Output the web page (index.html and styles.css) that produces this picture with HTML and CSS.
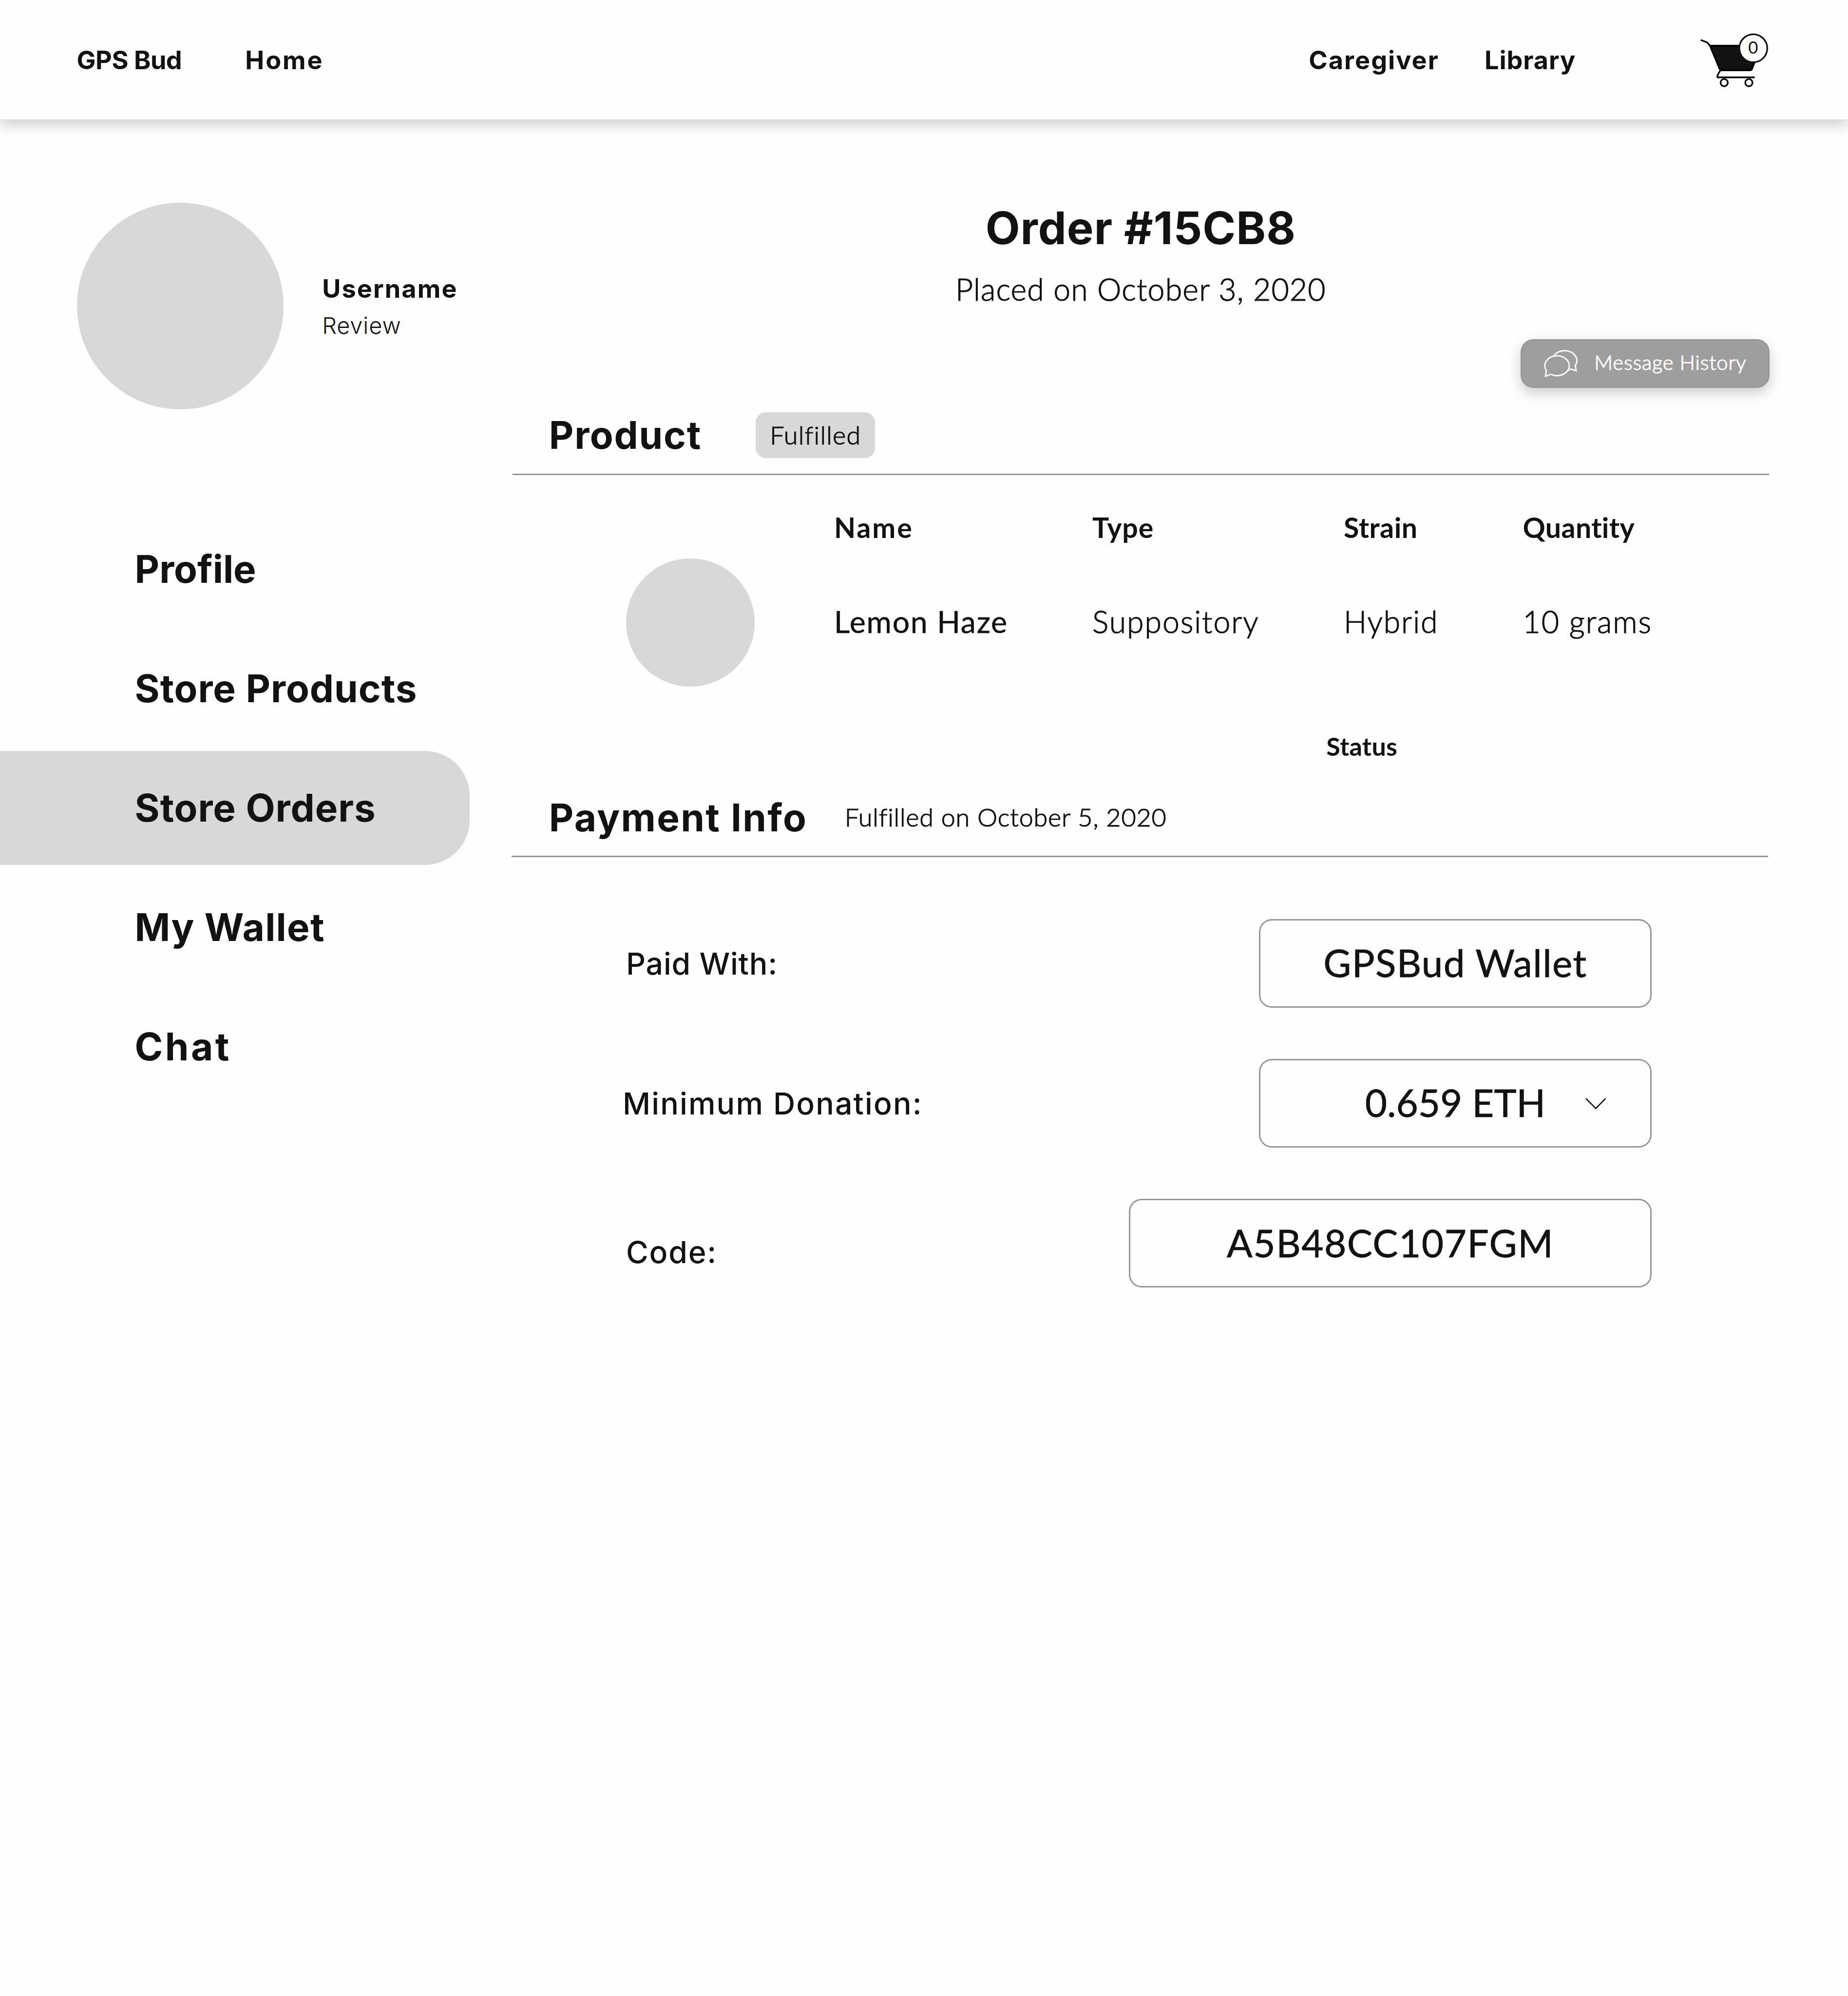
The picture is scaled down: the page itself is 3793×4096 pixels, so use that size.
FILE: index.html
```html
<!DOCTYPE html>
<html lang="en">
<head>
<meta charset="utf-8">
<title>GPS Bud - Order #15CB8</title>
<link rel="stylesheet" href="styles.css">
</head>
<body>
<header class="topbar">
  <a class="nav-link brand">GPS Bud</a>
  <a class="nav-link home">Home</a>
  <a class="nav-link caregiver">Caregiver</a>
  <a class="nav-link library">Library</a>
  <svg class="cart" viewBox="220 105 490 395" aria-label="Cart">
    <g stroke="#000" stroke-width="11.5" stroke-linecap="round" stroke-linejoin="round" fill="none">
      <path fill="#121212" stroke="none" d="M294 200 362 364Q366 373 376 373H574Q584 373 588 365L655 200Z"/>
      <path d="M234 162 272 176Q286 187 294 200L362 364Q366 373 376 373H574Q584 373 588 365L655 200H294"/>
      <path d="M368 373Q346 402 346 418Q346 422 350 422H604"/>
      <circle cx="394" cy="459" r="25.5"/>
      <circle cx="567" cy="459" r="25.5"/>
    </g>
    <circle cx="598" cy="218" r="98" fill="#fff" stroke="#121212" stroke-width="11.5"/>
    <text class="cart-count" x="597" y="254" text-anchor="middle">0</text>
  </svg>
</header>
<div class="layout">
  <aside class="sidebar">
    <div class="profile">
      <div class="avatar"></div>
      <div class="profile-text">
        <div class="username">Username</div>
        <div class="review">Review</div>
      </div>
    </div>
    <nav class="menu">
      <a class="menu-item tight">Profile</a>
      <a class="menu-item">Store Products</a>
      <a class="menu-item active">Store Orders</a>
      <a class="menu-item wallet">My Wallet</a>
      <a class="menu-item chat">Chat</a>
    </nav>
  </aside>
  <main class="content">
    <h1 class="order-title">Order #15CB8</h1>
    <p class="order-date">Placed on October 3, 2020</p>
    <button class="message-btn">
      <svg class="chat-icon" viewBox="3604 814 90 72" fill="none" stroke="#fff" stroke-width="3.2">
        <path d="M3632.5 831.1A28.8 23.2 0 0 1 3656.7 820.5A28.8 23.2 0 0 1 3681.5 855.5L3684 867.6 3671.5 863.3Q3668 865.2 3665 865.8"/>
        <path d="M3614 866.6A28.5 23.2 0 1 1 3624.5 875.5L3612 880.3Z"/>
      </svg>
      <span class="message-label">Message History</span>
    </button>

    <section class="product">
      <div class="section-head">
        <h2 class="section-title product-title">Product</h2>
        <span class="pill">Fulfilled</span>
      </div>
      <div class="product-grid">
        <div class="thumb"></div>
        <div class="th name">Name</div>
        <div class="th type">Type</div>
        <div class="th strain">Strain</div>
        <div class="th quantity">Quantity</div>
        <div class="td strong">Lemon Haze</div>
        <div class="td">Suppository</div>
        <div class="td">Hybrid</div>
        <div class="td">10 grams</div>
      </div>
      <div class="status">Status</div>
    </section>

    <section class="payment">
      <div class="section-head">
        <h2 class="section-title payment-title">Payment Info</h2>
        <span class="fulfilled-date">Fulfilled on October 5, 2020</span>
      </div>
      <div class="fields">
        <div class="field">
          <span class="label paid">Paid With:</span>
          <div class="box"><span class="value wallet-value">GPSBud Wallet</span></div>
        </div>
        <div class="field">
          <span class="label donation">Minimum Donation:</span>
          <div class="box select">
            <span class="value eth-value">0.659 ETH</span>
            <svg class="chevron" viewBox="0 0 16.2 9" fill="none" stroke="#121212" stroke-width="1"><path d="M.4.4 8.1 8.2 15.8.4"/></svg>
          </div>
        </div>
        <div class="field">
          <span class="label code">Code:</span>
          <div class="box wide"><span class="value code-value">A5B48CC107FGM</span></div>
        </div>
      </div>
    </section>
  </main>
</div>
</body>
</html>
```
FILE: styles.css
```css
/* 1rem is ten layout units; the page is 144rem wide */
html { font-size: 26.3403px; }
* { box-sizing: border-box; }
body {
  margin: 0;
  width: 144rem;
  height: 4096px;
  overflow: hidden;
  background: #fefefe;
  color: #121212;
  font-family: Inter, "Liberation Sans", sans-serif;
  white-space: nowrap;
}
h1, h2, p { margin: 0; font-weight: inherit; }

.topbar {
  display: grid;
  grid-template-columns: 13.13rem 82.87rem 13.7rem 16.76rem auto;
  align-items: center;
  height: 9.3rem;
  padding: .1rem 0 0 5.98rem;
  background: #fefefe;
  box-shadow: 0 .4rem 1rem rgba(0, 0, 0, .2);
}
.nav-link { font-size: 1.978rem; font-weight: 700; line-height: 2.8rem; }
.brand { letter-spacing: -.018rem; }
.home { letter-spacing: .11rem; }
.caregiver { letter-spacing: .078rem; }
.library { letter-spacing: .036rem; }
.cart { width: 5.444rem; height: 4.389rem; display: block; }
.cart-count { font-family: Lato, sans-serif; font-size: 119px; fill: #121212; }

.layout { display: grid; grid-template-columns: 39.93rem 97.92rem; }

.sidebar { padding-top: 6.5rem; }
.profile { display: flex; padding-left: 6rem; }
.avatar { width: 16.1rem; height: 16.1rem; border-radius: 50%; background: #d8d8d8; }
.profile-text { padding: 5.3rem 0 0 3rem; }
.username { font-size: 1.978rem; font-weight: 700; line-height: 2.8rem; letter-spacing: .082rem; }
.review { font-size: 1.78rem; font-weight: 300; line-height: 2.94rem; letter-spacing: .035rem; }

.menu { display: flex; flex-direction: column; gap: .4rem; margin-top: 8rem; }
.menu-item {
  width: 36.6rem;
  height: 8.9rem;
  padding-left: 10.5rem;
  border-radius: 0 3.5rem 3.5rem 0;
  font-size: 2.966rem;
  font-weight: 700;
  line-height: 8.9rem;
  letter-spacing: .038rem;
}
.menu-item.active { background: #d8d8d8; }
.menu-item.tight { letter-spacing: 0; }
.menu-item.wallet { letter-spacing: .05rem; }
.menu-item.chat { letter-spacing: .17rem; }

.content { display: flex; flex-direction: column; padding-top: 6.27rem; }
.order-title {
  text-align: center;
  font-size: 3.49rem;
  font-weight: 700;
  line-height: 4.4rem;
  letter-spacing: .041rem;
}
.order-date, .message-label, .pill, .td, .fulfilled-date {
  font-family: Lato, "Open Sans", sans-serif;
  font-weight: 300;
  -webkit-text-stroke: .045rem currentColor;
}
.order-date { text-align: center; font-size: 2.372rem; line-height: 5.06rem; letter-spacing: .047rem; }

.message-btn {
  display: flex;
  align-items: center;
  align-self: flex-end;
  width: 19.4rem;
  height: 3.8rem;
  margin: 1.38rem -.05rem 0 0;
  padding: 0 0 0 1.55rem;
  border: .12rem solid #979797;
  border-radius: 1rem;
  background: #9e9e9e;
  color: #fffdfb;
  box-shadow: 0 .4rem 1rem rgba(0, 0, 0, .2);
}
.chat-icon { width: 3rem; height: 2.4rem; }
.message-label { margin: -.22rem 0 0 1.07rem; font-size: 1.581rem; letter-spacing: .033rem; }

.product { margin-top: .69rem; }
.section-head {
  display: flex;
  align-items: center;
  height: 6.12rem;
  padding-left: 2.85rem;
  border-bottom: .12rem solid #979797;
}
.section-title { font-size: 2.966rem; font-weight: 700; line-height: 3.6rem; padding-top: .06rem; }
.product-title { width: 16.12rem; letter-spacing: .067rem; }
.payment-title { width: 23.04rem; letter-spacing: .09rem; }
.pill {
  width: 9.3rem;
  height: 3.6rem;
  border-radius: .8rem;
  background: #d8d8d8;
  text-align: center;
  font-size: 1.976rem;
  line-height: 3.5rem;
  letter-spacing: .05rem;
}

.product-grid {
  display: grid;
  grid-template-columns: 16.2rem 20.12rem 19.59rem 13.95rem auto;
  grid-template-rows: 2.8rem 6.82rem;
  row-gap: 4.22rem;
  padding: 2.64rem 0 0 8.87rem;
}
.thumb {
  grid-row: 1 / 3;
  width: 10rem;
  height: 10rem;
  margin-top: 3.84rem;
  border-radius: 50%;
  background: #d8d8d8;
}
.th, .status { font-family: Lato, "Open Sans", sans-serif; font-weight: 700; }
.th { font-size: 2.174rem; line-height: 2.84rem; }
.name { letter-spacing: .11rem; }
.type { letter-spacing: .03rem; }
.strain { letter-spacing: .02rem; }
.quantity { letter-spacing: .015rem; }
.td { font-size: 2.372rem; line-height: 3.48rem; letter-spacing: .075rem; }
.td.strong { font-weight: 400; letter-spacing: .068rem; -webkit-text-stroke-width: .02rem; }
.status {
  margin-top: 3.34rem;
  padding-left: 63.42rem;
  font-size: 1.976rem;
  line-height: 2.64rem;
  letter-spacing: .01rem;
}

.payment { margin: 1.2rem .08rem 0 -.08rem; }
.payment .section-head { padding-left: 2.93rem; }
.fulfilled-date { font-size: 1.976rem; letter-spacing: .032rem; padding-bottom: .12rem; }
.fields { display: flex; flex-direction: column; gap: 4rem; padding: 4.8rem 9.07rem 0 8.67rem; }
.field { display: flex; justify-content: space-between; align-items: center; height: 6.9rem; }
.label { font-size: 2.373rem; font-weight: 500; }
.paid { padding-left: .26rem; letter-spacing: .032rem; }
.donation { letter-spacing: .083rem; }
.code { padding: 1.36rem 0 0 .26rem; letter-spacing: .07rem; }
.box {
  display: flex;
  justify-content: center;
  align-items: center;
  width: 30.6rem;
  height: 6.9rem;
  padding-bottom: .1rem;
  border: .12rem solid #979797;
  border-radius: 1rem;
}
.box.wide { width: 40.73rem; }
.box.select { display: grid; grid-template-columns: 1fr auto 1fr; }
.value { font-family: Lato, "Open Sans", sans-serif; font-size: 2.964rem; -webkit-text-stroke: .03rem currentColor; }
.wallet-value { letter-spacing: .054rem; }
.eth-value { grid-column: 2; }
.code-value { letter-spacing: .058rem; }
.chevron { grid-column: 3; justify-self: end; width: 1.62rem; height: .9rem; margin: .2rem 3.43rem 0 0; }
```
